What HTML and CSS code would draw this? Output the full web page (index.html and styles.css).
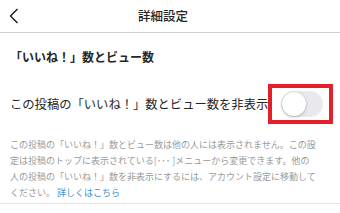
FILE: index.html
```html
<!DOCTYPE html>
<html lang="ja">
<head>
  <meta charset="UTF-8">
  <title>詳細設定</title>
  <link rel="stylesheet" href="styles.css">
</head>
<body>

<header class="topbar">
  <svg class="back" width="10" height="16" viewBox="0 0 10 16">
    <path d="M8.5 1 L1.5 8 L8.5 15" fill="none" stroke="#111" stroke-width="1.3"/>
  </svg>
  <h1 class="title">詳細設定</h1>
</header>

<div class="section">
  <h2 class="section-title">「いいね！」数とビュー数</h2>

  <div class="row">
    <span class="row-label">この投稿の「いいね！」数とビュー数を非表示</span>
    <div class="mark">
      <div class="toggle"><div class="knob"></div></div>
    </div>
  </div>

  <p class="note">この投稿の「いいね！」数とビュー数は他の人には表示されません。この設<br>定は投稿のトップに表示されている[･･･ ]メニューから変更できます。他の<br>人の投稿の「いいね！」数を非表示にするには、アカウント設定に移動して<br>ください。 <a href="#" class="link">詳しくはこちら</a></p>
</div>

</body>
</html>
```

FILE: styles.css
```css
body {
  margin: 0;
  width: 340px;
  height: 213px;
  overflow: hidden;
  background: #fff;
  font-family: "Noto Sans CJK JP", "Noto Sans", sans-serif;
  color: #262626;
}
.topbar {
  height: 32px;
  border-bottom: 1px solid #cfcfcf;
  display: flex;
  align-items: center;
  padding-left: 9px;
}
.back {
  display: block;
  margin-top: -1px;
}
.title {
  flex: 1;
  margin: 0;
  padding-right: 33px;
  text-align: center;
  font-size: 12.5px;
  font-weight: 500;
  line-height: 16px;
}
.section {
  padding: 0 0 0 10px;
  border-bottom: 1px solid #e3e3e3;
}
.section-title {
  margin: 16px 0 0;
  font-size: 12px;
  font-weight: 700;
  line-height: 16px;
}
.row {
  display: flex;
  align-items: center;
  justify-content: space-between;
  margin-top: 19px;
  padding-right: 7px;
}
.row-label {
  font-size: 12.3px;
  line-height: 16px;
  white-space: nowrap;
}
.mark {
  border: 4px solid #e4202b;
  width: 57px;
  height: 32px;
  display: flex;
  align-items: center;
  padding-left: 9px;
  box-sizing: content-box;
  width: 48px;
}
.toggle {
  width: 42px;
  height: 26px;
  border-radius: 13px;
  background: #e9e9eb;
  position: relative;
}
.knob {
  position: absolute;
  left: 1px;
  top: 1px;
  width: 24px;
  height: 24px;
  border-radius: 50%;
  background: #fff;
  box-shadow: 0 1px 3px rgba(0, 0, 0, 0.25), 0 0 0 0.5px rgba(0, 0, 0, 0.06);
}
.note {
  margin: 13px 0 0;
  padding-bottom: 2px;
  font-size: 9px;
  line-height: 16px;
  color: #9a9a9a;
  white-space: nowrap;
}
.link {
  color: #3d8fd6;
  text-decoration: none;
}
```
